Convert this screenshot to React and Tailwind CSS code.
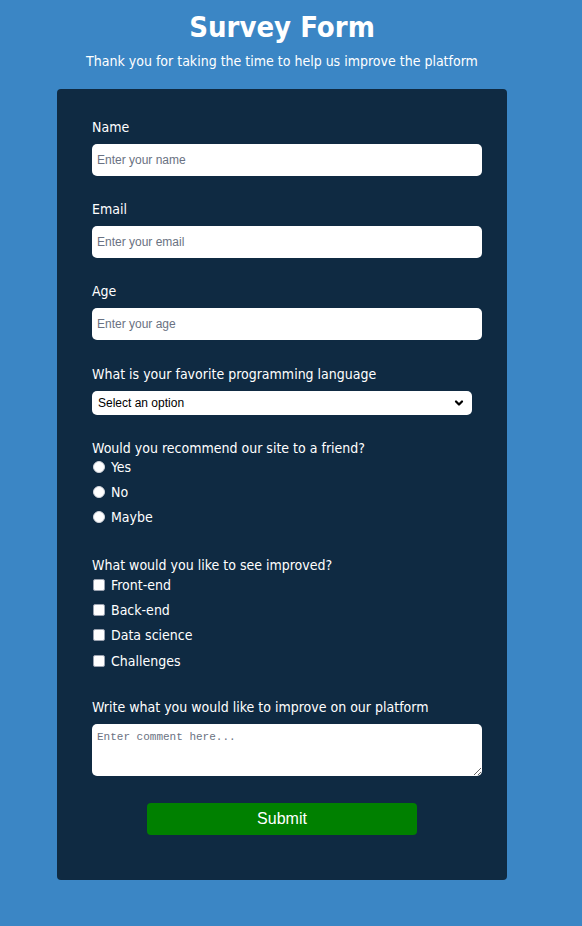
import React from 'react';
import { ChevronDown } from 'lucide-react';

const Field = ({ label, placeholder, type = 'text' }) => (
  <div className="mb-6">
    <label className="block h-[18px] leading-[18px] mb-2">{label}</label>
    <input
      type={type}
      placeholder={placeholder}
      className="block w-[390px] h-8 px-[5px] rounded-[5px] bg-white text-black text-[12px] font-['Liberation_Sans',sans-serif] placeholder-gray-500 outline-none"
    />
  </div>
);

const App = () => {
  const radios = ['Yes', 'No', 'Maybe'];
  const checks = ['Front-end', 'Back-end', 'Data science', 'Challenges'];

  return (
    <div className="min-h-[926px] bg-[#3b86c5] font-['DejaVu_Sans_Condensed','DejaVu_Sans',sans-serif] text-white text-[14px]">
      <div className="w-[564px] flex flex-col items-center">
        <h1 className="mt-[8px] h-[38px] leading-[38px] text-[29px] font-bold">Survey Form</h1>
        <p className="mt-[6px] h-[18px] leading-[18px] text-[14px]">Thank you for taking the time to help us improve the platform</p>

        {/* Form card */}
        <form className="mt-[19px] w-[450px] bg-[#0f2a42] rounded-[4px] pt-[29px] pl-[35px] pr-[25px] pb-[45px]">
          <Field label="Name" placeholder="Enter your name" />
          <Field label="Email" placeholder="Enter your email" type="email" />
          <Field label="Age" placeholder="Enter your age" type="number" />

          <div className="pt-[1px]">
            <label className="block h-[18px] leading-[18px] mb-2">What is your favorite programming language</label>
            <div className="relative w-[380px]">
              <select className="block w-full h-6 pl-[6px] rounded-[5px] bg-white text-black text-[12px] font-['Liberation_Sans',sans-serif] appearance-none outline-none">
                <option>Select an option</option>
                <option>JavaScript</option>
                <option>Python</option>
                <option>Java</option>
              </select>
              <ChevronDown className="absolute right-[7px] top-[6px] h-3 w-3 text-black pointer-events-none" strokeWidth={4.5} />
            </div>
          </div>

          <div className="mt-6">
            <p className="h-[18px] leading-[18px]">Would you recommend our site to a friend?</p>
            <div className="mt-[1px] flex flex-col gap-[7px]">
              {radios.map((r) => (
                <label key={r} className="flex items-center h-[18px]">
                  <input type="radio" name="recommend" className="appearance-none w-3 h-3 ml-[1px] rounded-full bg-white border border-gray-300" />
                  <span className="ml-[6px]">{r}</span>
                </label>
              ))}
            </div>
          </div>

          <div className="mt-[30px]">
            <p className="h-[18px] leading-[18px]">What would you like to see improved?</p>
            <div className="mt-[2px] flex flex-col gap-[7px]">
              {checks.map((c) => (
                <label key={c} className="flex items-center h-[18px] last:mt-[1px]">
                  <input type="checkbox" className="appearance-none w-3 h-3 ml-[1px] rounded-[2px] bg-white border border-gray-400" />
                  <span className="ml-[6px]">{c}</span>
                </label>
              ))}
            </div>
          </div>

          <div className="mt-[28px]">
            <label className="block h-[18px] leading-[18px] mb-2">Write what you would like to improve on our platform</label>
            <textarea
              placeholder="Enter comment here..."
              className="block w-[390px] h-[52px] px-[5px] py-[5px] rounded-[5px] bg-white text-black text-[11px] font-['Liberation_Mono',monospace] placeholder-gray-500 outline-none"
            />
          </div>

          <div className="mt-[27px] -ml-[10px] flex justify-center">
            <button type="button" className="w-[270px] h-8 rounded-[4px] bg-[#008000] text-white text-[16px] font-['Liberation_Sans',sans-serif]">
              Submit
            </button>
          </div>
        </form>
      </div>
    </div>
  );
};

export default App;
